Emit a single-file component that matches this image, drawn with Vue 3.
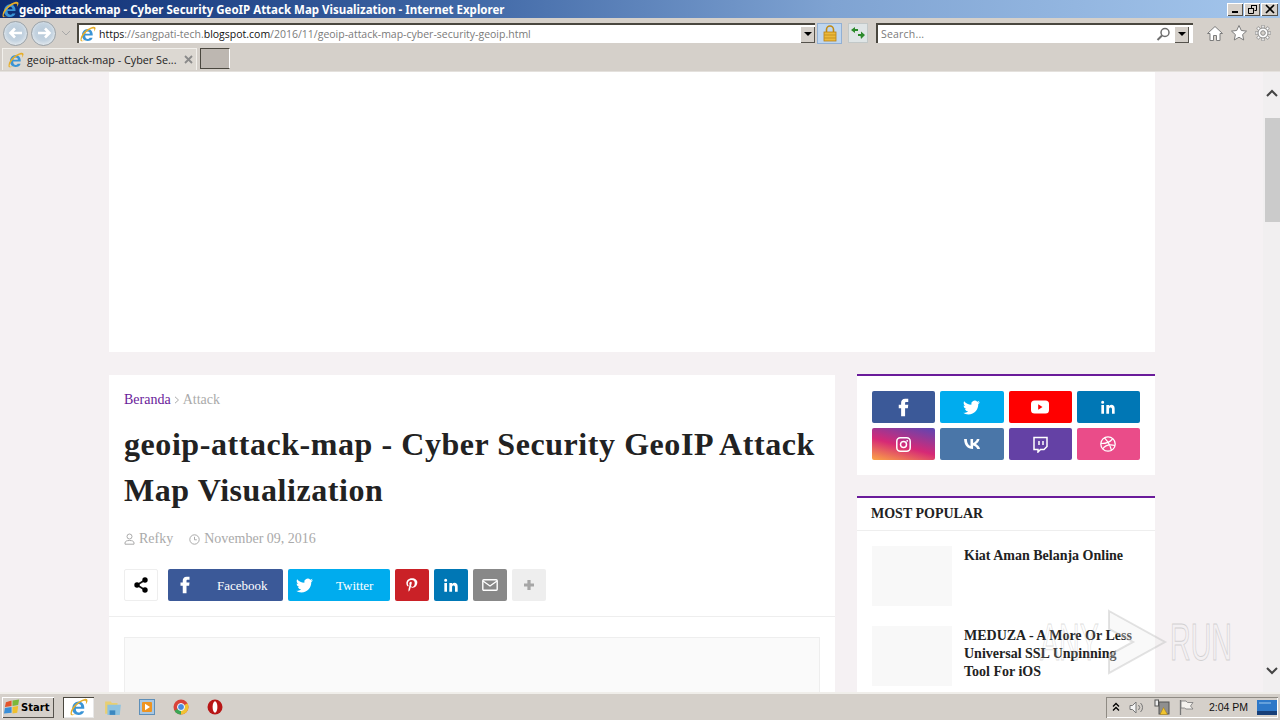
<script setup>
const icons = {
  fb: 'M14 8.5V6.2c0-1 .7-1.2 1.2-1.2H18V1h-3.8C10.5 1 9 3.7 9 6v2.5H6V13h3v10h5V13h3.5l.5-4.5z',
  tw: 'M23.953 4.57a10 10 0 01-2.825.775 4.958 4.958 0 002.163-2.723c-.951.555-2.005.959-3.127 1.184a4.92 4.92 0 00-8.384 4.482C7.69 8.095 4.067 6.13 1.64 3.162a4.822 4.822 0 00-.666 2.475c0 1.71.87 3.213 2.188 4.096a4.904 4.904 0 01-2.228-.616v.06a4.923 4.923 0 003.946 4.827 4.996 4.996 0 01-2.212.085 4.936 4.936 0 004.604 3.417 9.867 9.867 0 01-6.102 2.105c-.39 0-.779-.023-1.17-.067a13.995 13.995 0 007.557 2.209c9.053 0 13.998-7.496 13.998-13.985 0-.21 0-.42-.015-.63A9.935 9.935 0 0024 4.59z',
  li: 'M6 9H2v13h4zM4 2.5a2.3 2.3 0 100 4.6 2.3 2.3 0 000-4.6zM22 22h-4v-6.5c0-1.7-.6-2.9-2.1-2.9-1.2 0-1.9.8-2.2 1.6-.1.3-.1.7-.1 1V22H9.5s.1-11.7 0-13h4v1.9c.5-.8 1.5-2.2 3.7-2.2 2.8 0 4.8 1.8 4.8 5.7z',
  pin: 'M12 1C6.5 1 3.5 4.7 3.5 8.6c0 1.8 1 4.1 2.5 4.8.5.2.5 0 .8-1 .1-.3 0-.5-.2-.8-.5-.6-.8-1.5-.8-2.5 0-2.8 2.1-5.2 5.6-5.2 3 0 4.7 1.8 4.7 4.3 0 3.2-1.4 5.9-3.6 5.9-1.2 0-2.1-1-1.8-2.2.3-1.4 1-3 1-4 0-.9-.5-1.7-1.5-1.7-1.2 0-2.2 1.2-2.2 2.9 0 1 .4 1.8.4 1.8l-1.5 6c-.4 1.8-.1 3.9 0 4.1 0 .1.2.2.3.1.1-.2 1.7-2.1 2.2-4l.9-3.3c.4.8 1.7 1.6 3 1.6 4 0 6.7-3.6 6.7-8.5C20 4.3 16.8 1 12 1z',
  vk: 'M13 18C6.5 18 2.7 13.5 2.5 6h3.3c.1 5.5 2.5 7.8 4.4 8.3V6h3.1v4.7c1.9-.2 3.9-2.4 4.6-4.7H21c-.5 3-2.7 5.2-4.3 6.1 1.6.7 4.1 2.7 5 5.9h-3.4c-.7-2.3-2.6-4-5-4.3V18z'
}
const socials = [
  { name: 'facebook', cls: 'fb', path: icons.fb, size: 19 },
  { name: 'twitter', cls: 'tw', path: icons.tw, size: 17 },
  { name: 'youtube', cls: 'yt', kind: 'yt' },
  { name: 'linkedin', cls: 'li', path: icons.li, size: 16 },
  { name: 'instagram', cls: 'ig', kind: 'ig' },
  { name: 'vk', cls: 'vk', path: icons.vk, size: 20 },
  { name: 'twitch', cls: 'twitch', kind: 'twitch' },
  { name: 'dribbble', cls: 'dr', kind: 'dr' }
]
const popular = [
  { title: 'Kiat Aman Belanja Online' },
  { title: 'MEDUZA - A More Or Less Universal SSL Unpinning Tool For iOS' }
]
</script>

<template>
  <div class="window">
    <svg class="defs" width="0" height="0" aria-hidden="true">
      <defs>
        <symbol id="ie" viewBox="0 0 16 16">
          <path d="M2.300 9.500h10.400c.4-3.800-2-6.500-5-6.500C4.400 3 2 5.800 2 9.300 2 12.800 4.400 15 7.600 15c2.500 0 4.400-1.200 5-3.300H9.700c-.4.800-1.100 1.200-2 1.200-1.500 0-2.500-1.200-2.500-3.400zM5.300 7.700C5.500 6.300 6.400 5.400 7.700 5.400s2.100.9 2.200 2.300z" fill="#3a94d6" fill-rule="evenodd"/>
          <path d="M.6 12.500C1.100 8 7.500 2 13 .8c1.700-.3 2.800.4 2.500 2-.2 1-.8 2-1.600 2.900.4-1.300.6-2.400.1-2.900-1-1-5 .7-8.500 4.100C2.500 10.300 1 13.500 1.900 14.400c.6.600 2 .3 3.500-.7C3.300 15.400 1 15.800.6 14.700c-.2-.5-.1-1.300 0-2.200z" fill="#e6ae2a"/>
        </symbol>
      </defs>
    </svg>

    <header class="titlebar">
      <svg class="title-ie" width="17" height="17"><use href="#ie"/></svg>
      <span class="title-text">geoip-attack-map - Cyber Security GeoIP Attack Map Visualization - Internet Explorer</span>
      <div class="winbtns">
        <span class="winbtn"><svg width="15" height="12"><rect x="4" y="8" width="6" height="2" fill="#000"/></svg></span>
        <span class="winbtn"><svg width="15" height="12"><path d="M6.500 2.500h5v5h-2M3.500 5.500h5v5h-5z M6.500 2.500v3" fill="none" stroke="#000"/><path d="M6 2.500h6M3 5.500h6" stroke="#000"/></svg></span>
        <span class="winbtn close"><svg width="16" height="12"><path d="M4 2l8 8M12 2l-8 8" stroke="#000" stroke-width="1.700"/></svg></span>
      </div>
    </header>

    <div class="navbar">
      <span class="round"><svg width="18" height="18" viewBox="0 0 18 18"><path d="M15 9H4M8 4.500L3.500 9 8 13.500" fill="none" stroke="#fff" stroke-width="2.600"/></svg></span>
      <span class="round fwd"><svg width="18" height="18" viewBox="0 0 18 18"><path d="M3 9h11M10 4.500L14.500 9 10 13.500" fill="none" stroke="#fff" stroke-width="2.600"/></svg></span>
      <svg class="hist" width="10" height="6"><path d="M1 1l4 4 4-4" fill="none" stroke="#a8a8a8"/></svg>
      <div class="address">
        <svg width="16" height="16" class="addr-ie"><use href="#ie"/></svg>
        <span class="url"><b>https</b>://sangpati-tech.<b>blogspot.com</b>/2016/11/geoip-attack-map-cyber-security-geoip.html</span>
        <span class="drop"><i></i></span>
      </div>
      <span class="lock">
        <svg width="14" height="17" viewBox="0 0 14 17"><path d="M3.500 7V4.500a3.500 3.500 0 017 0V7" fill="none" stroke="#c08a14" stroke-width="1.600"/><rect x="1" y="7" width="12" height="9" fill="#ecb93a" stroke="#b97f12" stroke-width=".8"/><path d="M1 10h12M1 13h12" stroke="#c79320"/></svg>
      </span>
      <span class="refresh">
        <svg width="16" height="14" viewBox="0 0 16 14"><path d="M1 4l4-3v2h3v2H5v2zM15 9l-4-3.500V8H8v2h2.500L11 13z" fill="#2b8a2b"/></svg>
      </span>
      <div class="search">
        <span class="search-text">Search...</span>
        <svg class="mag" width="15" height="14" viewBox="0 0 15 14"><circle cx="9" cy="5.500" r="4" fill="#fff" stroke="#6e6e6e" stroke-width="1.500"/><path d="M6 8.500L1.500 13" stroke="#6e6e6e" stroke-width="2"/></svg>
        <span class="drop"><i></i></span>
      </div>
      <div class="tools">
        <svg width="18" height="18" viewBox="0 0 18 18"><path d="M1.500 9.500L9 2.500l7.500 7H14v7h-3.500v-5h-3v5H4v-7z" fill="#fff" stroke="#7c7c7c"/></svg>
        <svg width="18" height="18" viewBox="0 0 18 18"><path d="M9 1.500l2.300 5 5.200.6-3.900 3.500 1.100 5.400L9 13.200 4.300 16l1.100-5.400L1.500 7.100l5.200-.6z" fill="#fff" stroke="#7c7c7c"/></svg>
        <svg width="18" height="18" viewBox="0 0 18 18"><path d="M9 1v3M9 14v3M1 9h3M14 9h3M3.300 3.300l2.200 2.200M12.500 12.500l2.200 2.200M14.700 3.300l-2.200 2.200M5.500 12.500l-2.200 2.200" stroke="#8a8a8a" stroke-width="3"/><path d="M9 1.500v3M9 13.500v3M1.500 9h3M13.500 9h3M3.600 3.600l2 2M12.400 12.400l2 2M14.400 3.600l-2 2M5.600 12.400l-2 2" stroke="#fff" stroke-width="1.500"/><circle cx="9" cy="9" r="5" fill="#fff" stroke="#8a8a8a"/><circle cx="9" cy="9" r="2.300" fill="#d5d0ca" stroke="#8a8a8a"/></svg>
      </div>
    </div>

    <div class="tabbar">
      <div class="tab">
        <svg width="16" height="16"><use href="#ie"/></svg>
        <span class="tab-title">geoip-attack-map - Cyber Se...</span>
        <svg class="tab-x" width="9" height="9"><path d="M1 1l7 7M8 1L1 8" stroke="#8a8a8a" stroke-width="1.800"/></svg>
      </div>
      <div class="newtab"></div>
    </div>

    <main class="page">
      <div class="scroller">
        <div class="content">
          <div class="ad"></div>
          <div class="columns">
            <article class="post">
              <div class="post-head">
                <nav class="crumbs"><a>Beranda</a><svg width="6" height="8" viewBox="0 0 6 8"><path d="M1 .8L4.500 4 1 7.200" fill="none" stroke="#aaa"/></svg><span>Attack</span></nav>
                <h1>geoip-attack-map - Cyber Security GeoIP Attack Map Visualization</h1>
                <div class="meta">
                  <span class="meta-item">
                    <svg width="11" height="12" viewBox="0 0 11 12"><circle cx="5.500" cy="3.500" r="2.500" fill="none" stroke="#aaa"/><path d="M1 11.200V10c0-1.700 1.500-2.500 4.500-2.500S10 8.300 10 10v1.200z" fill="none" stroke="#aaa"/></svg>
                    Refky
                  </span>
                  <span class="meta-item">
                    <svg width="11" height="11" viewBox="0 0 11 11"><circle cx="5.500" cy="5.500" r="4.700" fill="none" stroke="#aaa"/><path d="M5.500 2.800v3h2.300" fill="none" stroke="#aaa"/></svg>
                    November 09, 2016
                  </span>
                </div>
                <div class="share">
                  <span class="sh-lead">
                    <svg width="16" height="16" viewBox="0 0 16 16"><path d="M12 3L4 8l8 5" fill="none" stroke="#111" stroke-width="1.800"/><circle cx="12" cy="3" r="2.700"/><circle cx="4" cy="8" r="2.700"/><circle cx="12" cy="13" r="2.700"/></svg>
                  </span>
                  <a class="sh wide fb"><svg width="18" height="18" viewBox="0 0 24 24"><path :d="icons.fb" fill="#fff"/></svg><span>Facebook</span></a>
                  <a class="sh wide tw two"><svg width="17" height="17" viewBox="0 0 24 24"><path :d="icons.tw" fill="#fff"/></svg><span>Twitter</span></a>
                  <a class="sh pin"><svg width="16" height="17" viewBox="0 0 24 24"><path :d="icons.pin" fill="#fff"/></svg></a>
                  <a class="sh li"><svg width="16" height="16" viewBox="0 0 24 24"><path :d="icons.li" fill="#fff"/></svg></a>
                  <a class="sh mail"><svg width="16" height="12" viewBox="0 0 16 12"><rect x=".8" y=".8" width="14.400" height="10.400" rx="1" fill="none" stroke="#fff" stroke-width="1.400"/><path d="M1 2l7 5 7-5" fill="none" stroke="#fff" stroke-width="1.400"/></svg></a>
                  <a class="sh plus"><svg width="12" height="12" viewBox="0 0 12 12"><path d="M6 1v10M1 6h10" stroke="#a6a6a6" stroke-width="3.200"/></svg></a>
                </div>
              </div>
              <div class="post-body"><div class="slot"></div></div>
            </article>

            <aside class="sidebar">
              <section class="widget social">
                <a v-for="s in socials" :key="s.name" class="tile" :class="s.cls">
                  <svg v-if="s.path" :width="s.size" :height="s.size" viewBox="0 0 24 24"><path :d="s.path" fill="#fff"/></svg>
                  <svg v-else-if="s.kind === 'yt'" width="18" height="14" viewBox="0 0 18 14"><rect width="18" height="13" y=".5" rx="3.500" fill="#fff"/><path d="M7.200 4.300L11.500 7l-4.300 2.700z" fill="#f00"/></svg>
                  <svg v-else-if="s.kind === 'ig'" width="15" height="15" viewBox="0 0 15 15"><rect x=".8" y=".8" width="13.400" height="13.400" rx="3.500" fill="none" stroke="#fff" stroke-width="1.500"/><circle cx="7.500" cy="7.500" r="3" fill="none" stroke="#fff" stroke-width="1.500"/><circle cx="11.200" cy="3.800" r=".9" fill="#fff"/></svg>
                  <svg v-else-if="s.kind === 'twitch'" width="15" height="17" viewBox="0 0 15 17"><path d="M1 1.500h13v9L11 13.500H7.500L5 16v-2.500H1z" fill="none" stroke="#fff" stroke-width="1.500"/><path d="M6 5v4M10 5v4" stroke="#fff" stroke-width="1.500"/></svg>
                  <svg v-else width="16" height="16" viewBox="0 0 16 16"><circle cx="8" cy="8" r="7.200" fill="none" stroke="#fff" stroke-width="1.300"/><path d="M4.500 1.800C8 5.500 10.500 10 11.500 14.500M1 7.500c4.500.2 8.500-1 11.500-4.500M2.500 13C5 9.500 9.500 8 15 9.500" fill="none" stroke="#fff" stroke-width="1.200"/></svg>
                </a>
              </section>

              <section class="widget popular">
                <h2>MOST POPULAR</h2>
                <ul>
                  <li v-for="p in popular" :key="p.title">
                    <div class="thumb"></div>
                    <a>{{ p.title }}</a>
                  </li>
                </ul>
              </section>
            </aside>
          </div>
        </div>
      </div>

      <div class="scrollbar">
        <svg width="12" height="8" viewBox="0 0 12 8"><path d="M1 7l5-5 5 5" fill="none" stroke="#444" stroke-width="2"/></svg>
        <div class="thumbbar"></div>
        <svg class="down" width="12" height="8" viewBox="0 0 12 8"><path d="M1 1l5 5 5-5" fill="none" stroke="#444" stroke-width="2"/></svg>
      </div>

      <div class="watermark">
        <span class="wm-text wm-any">ANY</span>
        <svg class="wm-arrow" width="66" height="66" viewBox="0 0 66 66"><path d="M6 2l56 31-56 31V46l24-13L6 20z" fill="rgba(235,235,235,.3)" stroke="rgba(185,185,185,.4)" stroke-width="2"/></svg>
        <span class="wm-text wm-run">RUN</span>
      </div>
    </main>

    <footer class="taskbar">
      <button class="start">
        <svg width="17" height="16" viewBox="0 0 18 16"><path d="M2 3l6-2v6l-7 1z" fill="#e4562c"/><path d="M9 1l7-1-1 6-6 1z" fill="#7cb83a"/><path d="M1 9l7-1v6l-8 1z" fill="#3a8fd8"/><path d="M9 8l6-1-1 7-5 1z" fill="#f0c02c"/></svg>
        <span>Start</span>
      </button>
      <span class="task active"><svg width="18" height="18"><use href="#ie"/></svg></span>
      <span class="task">
        <svg width="18" height="18" viewBox="0 0 16 16"><path d="M1 3h5l1 1.500h5V14H1z" fill="#e8cf72"/><path d="M3 6h12l-1 9H3z" fill="#8ec3e0"/><rect x="5" y="11" width="5" height="4" fill="#3b88c0"/></svg>
      </span>
      <span class="task">
        <svg width="16" height="16" viewBox="0 0 16 16"><rect x=".5" y=".5" width="15" height="15" fill="#a9c7e2" stroke="#5e8fb8"/><rect x="3" y="3" width="10" height="10" rx="1" fill="#ee9421"/><path d="M6 4.800L11 8l-5 3.200z" fill="#fff"/></svg>
      </span>
      <span class="task">
        <svg width="16" height="16" viewBox="0 0 16 16"><circle cx="8" cy="8" r="7.500" fill="#d9433a"/><path d="M8 8L1.500 11.700A7.500 7.500 0 008 15.500z" fill="#3aa655"/><path d="M8 8v7.500a7.500 7.500 0 006.500-11.200z" fill="#f1c232"/><circle cx="8" cy="8" r="3.500" fill="#4a8be0" stroke="#fff"/></svg>
      </span>
      <span class="task">
        <svg width="16" height="16" viewBox="0 0 16 16"><circle cx="8" cy="8" r="7.500" fill="#b81616"/><ellipse cx="8" cy="8" rx="2.400" ry="5.800" fill="#fff"/></svg>
      </span>
      <div class="tray">
        <svg width="8" height="10" viewBox="0 0 8 10"><path d="M1 4.500l3-3 3 3M1 8.500l3-3 3 3" fill="none" stroke="#000" stroke-width="1.300"/></svg>
        <svg width="16" height="15" viewBox="0 0 16 14"><path d="M1 5h2.500L7 1.500v11L3.500 9H1z" fill="#f4f4f4" stroke="#777"/><path d="M9.500 4.500a3.500 3.500 0 010 5M11.500 2.500a6 6 0 010 9" fill="none" stroke="#777"/></svg>
        <svg width="16" height="16" viewBox="0 0 16 16"><rect x="1" y="1" width="3.500" height="6" fill="#eee" stroke="#555"/><rect x="5" y="3" width="10" height="12" fill="#8f8f8f" stroke="#555"/><path d="M9.500 8.500l4 7h-7.500z" fill="#f1c52e" stroke="#a77c10" stroke-width=".5"/></svg>
        <svg width="15" height="16" viewBox="0 0 15 16"><path d="M1.500 1v15" stroke="#777" stroke-width="1.300"/><path d="M2 2h5l1.500 1.500H14L11.500 7 14 10H7L5.500 9H2z" fill="#f4f2ee" stroke="#777" stroke-width=".8"/></svg>
        <span class="clock">2:04 PM</span>
        <svg class="desk" width="20" height="15" viewBox="0 0 20 15"><rect width="20" height="15" fill="#2e78c8"/><rect y="11" width="20" height="4" fill="#173f78"/><path d="M2 3h12" stroke="#9cc8ee"/></svg>
      </div>
    </footer>
  </div>
</template>

<style scoped>
.window {
  width: 1280px;
  height: 720px;
  display: flex;
  flex-direction: column;
  overflow: hidden;
  background: #d5d0ca;
  font-family: "Liberation Serif", serif;
}
.defs { position: absolute; }
svg { display: block; flex: none; }

.titlebar {
  height: 18px;
  display: flex;
  align-items: center;
  flex: none;
  background: linear-gradient(90deg, #0d2c72 0%, #3d65a4 35%, #7fa3d2 65%, #a4c6ec 100%);
  position: relative;
}
.title-ie { margin-left: 2px; }
.title-text {
  margin-left: 0;
  color: #fff;
  font: bold 11.500px "Noto Sans", sans-serif;
  white-space: nowrap;
}
.winbtns { margin-left: auto; display: flex; gap: 1px; margin-right: 2px; }
.winbtn {
  width: 16px;
  height: 13px;
  background: #d5d0ca;
  box-shadow: inset 1px 1px 0 #fff, inset -1px -1px 0 #55524c;
  display: flex;
  align-items: center;
  justify-content: center;
}
.winbtn.close { width: 17px; }

.navbar {
  height: 29px;
  padding-top: 1px;
  box-sizing: border-box;
  flex: none;
  display: flex;
  align-items: center;
  background: #d5d0ca;
  font-family: "DejaVu Sans", sans-serif;
}
.round {
  width: 25px;
  height: 25px;
  border-radius: 50%;
  margin-left: 3px;
  background: radial-gradient(circle at 50% 45%, #b6c8d8 0%, #c4d3e0 50%, #e6ebef 78%, #a9aeb2 100%);
  border: 1px solid #9aa2a8;
  box-sizing: border-box;
  display: flex;
  align-items: center;
  justify-content: center;
}
.round.fwd { margin-left: 3px; }
.hist { margin: 0 6px 0 5px; }
.address {
  width: 738px;
  height: 20px;
  box-sizing: border-box;
  background: #fff;
  border-top: 2px solid #4a473f;
  border-left: 2px solid #4a473f;
  display: flex;
  align-items: center;
}
.addr-ie { margin-left: 1px; }
.url {
  margin-left: 3px;
  font: 10.500px "Open Sans", sans-serif;
  color: #7a7a7a;
  white-space: nowrap;
}
.url b { font-weight: 400; color: #111; }
.drop {
  width: 15px;
  height: 17px;
  margin-left: auto;
  background: #d5d0ca;
  box-shadow: inset 1px 1px 0 #fff, inset -1px -1px 0 #55524c;
  display: flex;
  align-items: center;
  justify-content: center;
}
.drop i {
  border-left: 4px solid transparent;
  border-right: 4px solid transparent;
  border-top: 4px solid #000;
}
.lock {
  width: 25px;
  height: 21px;
  margin-left: 2px;
  background: #bfd6ef;
  border: 1px solid #92b0d4;
  box-sizing: border-box;
  display: flex;
  align-items: center;
  justify-content: center;
}
.refresh {
  width: 20px;
  height: 20px;
  margin-left: 6px;
  background: #dfe5e6;
  border: 1px solid #c2c8c8;
  box-sizing: border-box;
  display: flex;
  align-items: center;
  justify-content: center;
}
.search {
  width: 317px;
  height: 20px;
  margin-left: 8px;
  box-sizing: border-box;
  background: #fff;
  border-top: 2px solid #4a473f;
  border-left: 2px solid #4a473f;
  padding-right: 4px;
  display: flex;
  align-items: center;
}
.search .drop { margin-left: 3px; }
.search-text {
  margin-left: 3px;
  font: 10.500px "Open Sans", sans-serif;
  letter-spacing: .2px;
  color: #7a7a7a;
}
.mag { margin-left: auto; }
.tools { display: flex; gap: 6px; margin-left: 13px; }

.tabbar {
  height: 25px;
  padding-top: 1px;
  flex: none;
  display: flex;
  align-items: flex-start;
  background: #d5d0ca;
  border-bottom: 1px solid #e4e1dd;
  box-sizing: border-box;
}
.tab {
  width: 195px;
  height: 22px;
  margin-left: 2px;
  padding-left: 5px;
  box-sizing: border-box;
  display: flex;
  align-items: center;
  background: #dcd8d2;
  border-right: 1px solid #f2f0ec;
  border-left: 1px solid #f2f0ec;
  border-top: 1px solid #f2f0ec;
}
.tab-title {
  margin-left: 3px;
  font: 10.800px "Open Sans", sans-serif;
  color: #222;
  white-space: nowrap;
}
.tab-x { margin-left: auto; margin-right: 3px; }
.newtab {
  width: 30px;
  height: 21px;
  margin-left: 3px;
  box-sizing: border-box;
  background: #bdb7b1;
  border: 1px solid #4a473f;
  border-right-color: #fff;
}

.page {
  flex: 1;
  min-height: 0;
  display: flex;
  position: relative;
  overflow: hidden;
  background: #f5f1f3;
}
.scroller { flex: 1; min-width: 0; overflow: hidden; }
.content { width: 1046px; margin-left: 109px; }
.ad { height: 280px; background: #fff; }
.columns {
  margin-top: 23px;
  display: flex;
  justify-content: space-between;
  align-items: flex-start;
}

.post { width: 726px; background: #fff; }
.post-head {
  padding: 15px;
  border-bottom: 1px solid #eee;
}
.crumbs {
  display: flex;
  align-items: center;
  gap: 3px;
  font-size: 14px;
  line-height: 18px;
  color: #aaa;
  padding-top: 1px;
}
.crumbs a { color: #6a1b9a; }
h1 {
  margin: 12px 0 0;
  font-size: 32px;
  line-height: 46px;
  letter-spacing: .56px;
  font-weight: 700;
  color: #222;
}
.meta {
  margin-top: 16px;
  display: flex;
  gap: 16px;
  font-size: 14px;
  line-height: 20px;
  color: #aaa;
}
.meta-item { display: flex; align-items: center; gap: 4px; }
.share { margin-top: 20px; display: flex; gap: 5px; align-items: stretch; height: 32px; }
.sh-lead {
  width: 34px;
  margin-right: 5px;
  box-sizing: border-box;
  border: 1px solid #eee;
  border-radius: 2px;
  display: flex;
  align-items: center;
  justify-content: center;
}
.sh {
  width: 34px;
  border-radius: 2px;
  display: flex;
  align-items: center;
  justify-content: center;
  color: #fff;
  font-size: 13px;
}
.sh.wide { width: 115px; justify-content: flex-start; padding-left: 8px; box-sizing: border-box; }
.sh.wide span { margin-left: 23px; padding-top: 2px; }
.sh.two { width: 102px; padding-left: 8px; }
.sh.two span { margin-left: 23px; }
.sh.fb { background: #3b5998; }
.sh.tw { background: #00acee; }
.sh.pin { background: #ca2127; }
.sh.li { background: #0077b5; }
.sh.mail { background: #888; }
.sh.plus { background: #eee; }
.post-body { padding: 20px 15px 0; }
.slot { height: 200px; background: #fafafa; border: 1px solid #eee; }

.sidebar { width: 298px; display: flex; flex-direction: column; gap: 22px; }
.widget { background: #fff; border-top: 2px solid #6a1b9a; margin-top: -1px; }
.social {
  padding: 15px;
  display: grid;
  grid-template-columns: repeat(4, 1fr);
  gap: 5px;
}
.tile {
  height: 32px;
  border-radius: 2px;
  display: flex;
  align-items: center;
  justify-content: center;
}
.tile.fb { background: #3b5998; }
.tile.tw { background: #00acee; }
.tile.yt { background: #f00; }
.tile.li { background: #0077b5; }
.tile.ig { background: linear-gradient(195deg, #5a47b4 0%, #d62976 55%, #fca644 100%); }
.tile.vk { background: #4a76a8; }
.tile.twitch { background: #6441a5; }
.tile.dr { background: #ea4c89; }
.popular h2 {
  margin: 0;
  padding: 1px 15px 0 14px;
  height: 33px;
  line-height: 30px;
  font-size: 14px;
  font-weight: 700;
  color: #222;
  border-bottom: 1px solid #eee;
  box-sizing: border-box;
}
.popular ul { list-style: none; margin: 0; padding: 15px 15px 0; }
.popular li { display: flex; gap: 12px; margin-bottom: 20px; }
.thumb { width: 80px; height: 60px; flex: none; background: #f8f8f8; }
.popular a { font-size: 14px; line-height: 18px; font-weight: 700; color: #222; padding-top: 1px; }

.scrollbar {
  width: 17px;
  flex: none;
  background: #f1eff0;
  display: flex;
  flex-direction: column;
  align-items: center;
  padding-top: 17px;
  box-sizing: border-box;
}
.thumbbar {
  width: 15px;
  height: 104px;
  margin: 21px 0 0 2px;
  background: #cbcbcb;
}
.down { margin-top: auto; margin-bottom: 17px; }

.watermark {
  position: absolute;
  left: 1040px;
  top: 537px;
  width: 200px;
  height: 66px;
  display: flex;
  align-items: center;
  pointer-events: none;
}
.wm-text {
  font: 400 52px "Liberation Sans", sans-serif;
  color: rgba(240, 240, 240, .22);
  -webkit-text-stroke: 1px rgba(175, 175, 175, .5);
  transform: scaleX(.55);
  transform-origin: left center;
  white-space: nowrap;
  width: 62px;
}
.wm-any { width: 62px; color: rgba(240, 240, 240, .12); -webkit-text-stroke-color: rgba(175, 175, 175, .4); }
.wm-arrow { margin-left: 1px; margin-right: 1px; }

.taskbar {
  height: 28px;
  flex: none;
  display: flex;
  align-items: center;
  background: #d5d0ca;
  border-top: 2px solid #f0eeea;
  box-sizing: border-box;
  font-family: "DejaVu Sans", sans-serif;
}
.start {
  margin-left: 2px;
  width: 52px;
  height: 21px;
  padding: 0 0 0 2px;
  display: flex;
  align-items: center;
  gap: 0;
  border: 0;
  background: #d5d0ca;
  box-shadow: inset 1px 1px 0 #fff, inset -1px -1px 0 #55524c;
  font: bold 10px "DejaVu Sans", sans-serif;
  color: #000;
}
.task {
  width: 34px;
  height: 21px;
  display: flex;
  align-items: center;
  justify-content: center;
}
.task.active {
  width: 31px;
  margin: 0 2px 0 9px;
  background: #fff;
  box-shadow: inset 1px 1px 0 #4a473f, inset -1px -1px 0 #e8e8e8;
}
.tray {
  margin-left: auto;
  margin-right: 2px;
  width: 172px;
  height: 21px;
  box-sizing: border-box;
  padding-left: 6px;
  display: flex;
  align-items: center;
  gap: 9px;
  box-shadow: inset 1px 1px 0 #8f8b84, inset -1px -1px 0 #fff;
}
.clock { font: 10.500px "Liberation Sans", sans-serif; color: #111; margin-left: 6px; white-space: nowrap; }
.desk { margin-left: auto; margin-right: 3px; }
</style>

<style>
html, body { margin: 0; overflow: hidden; }
</style>
